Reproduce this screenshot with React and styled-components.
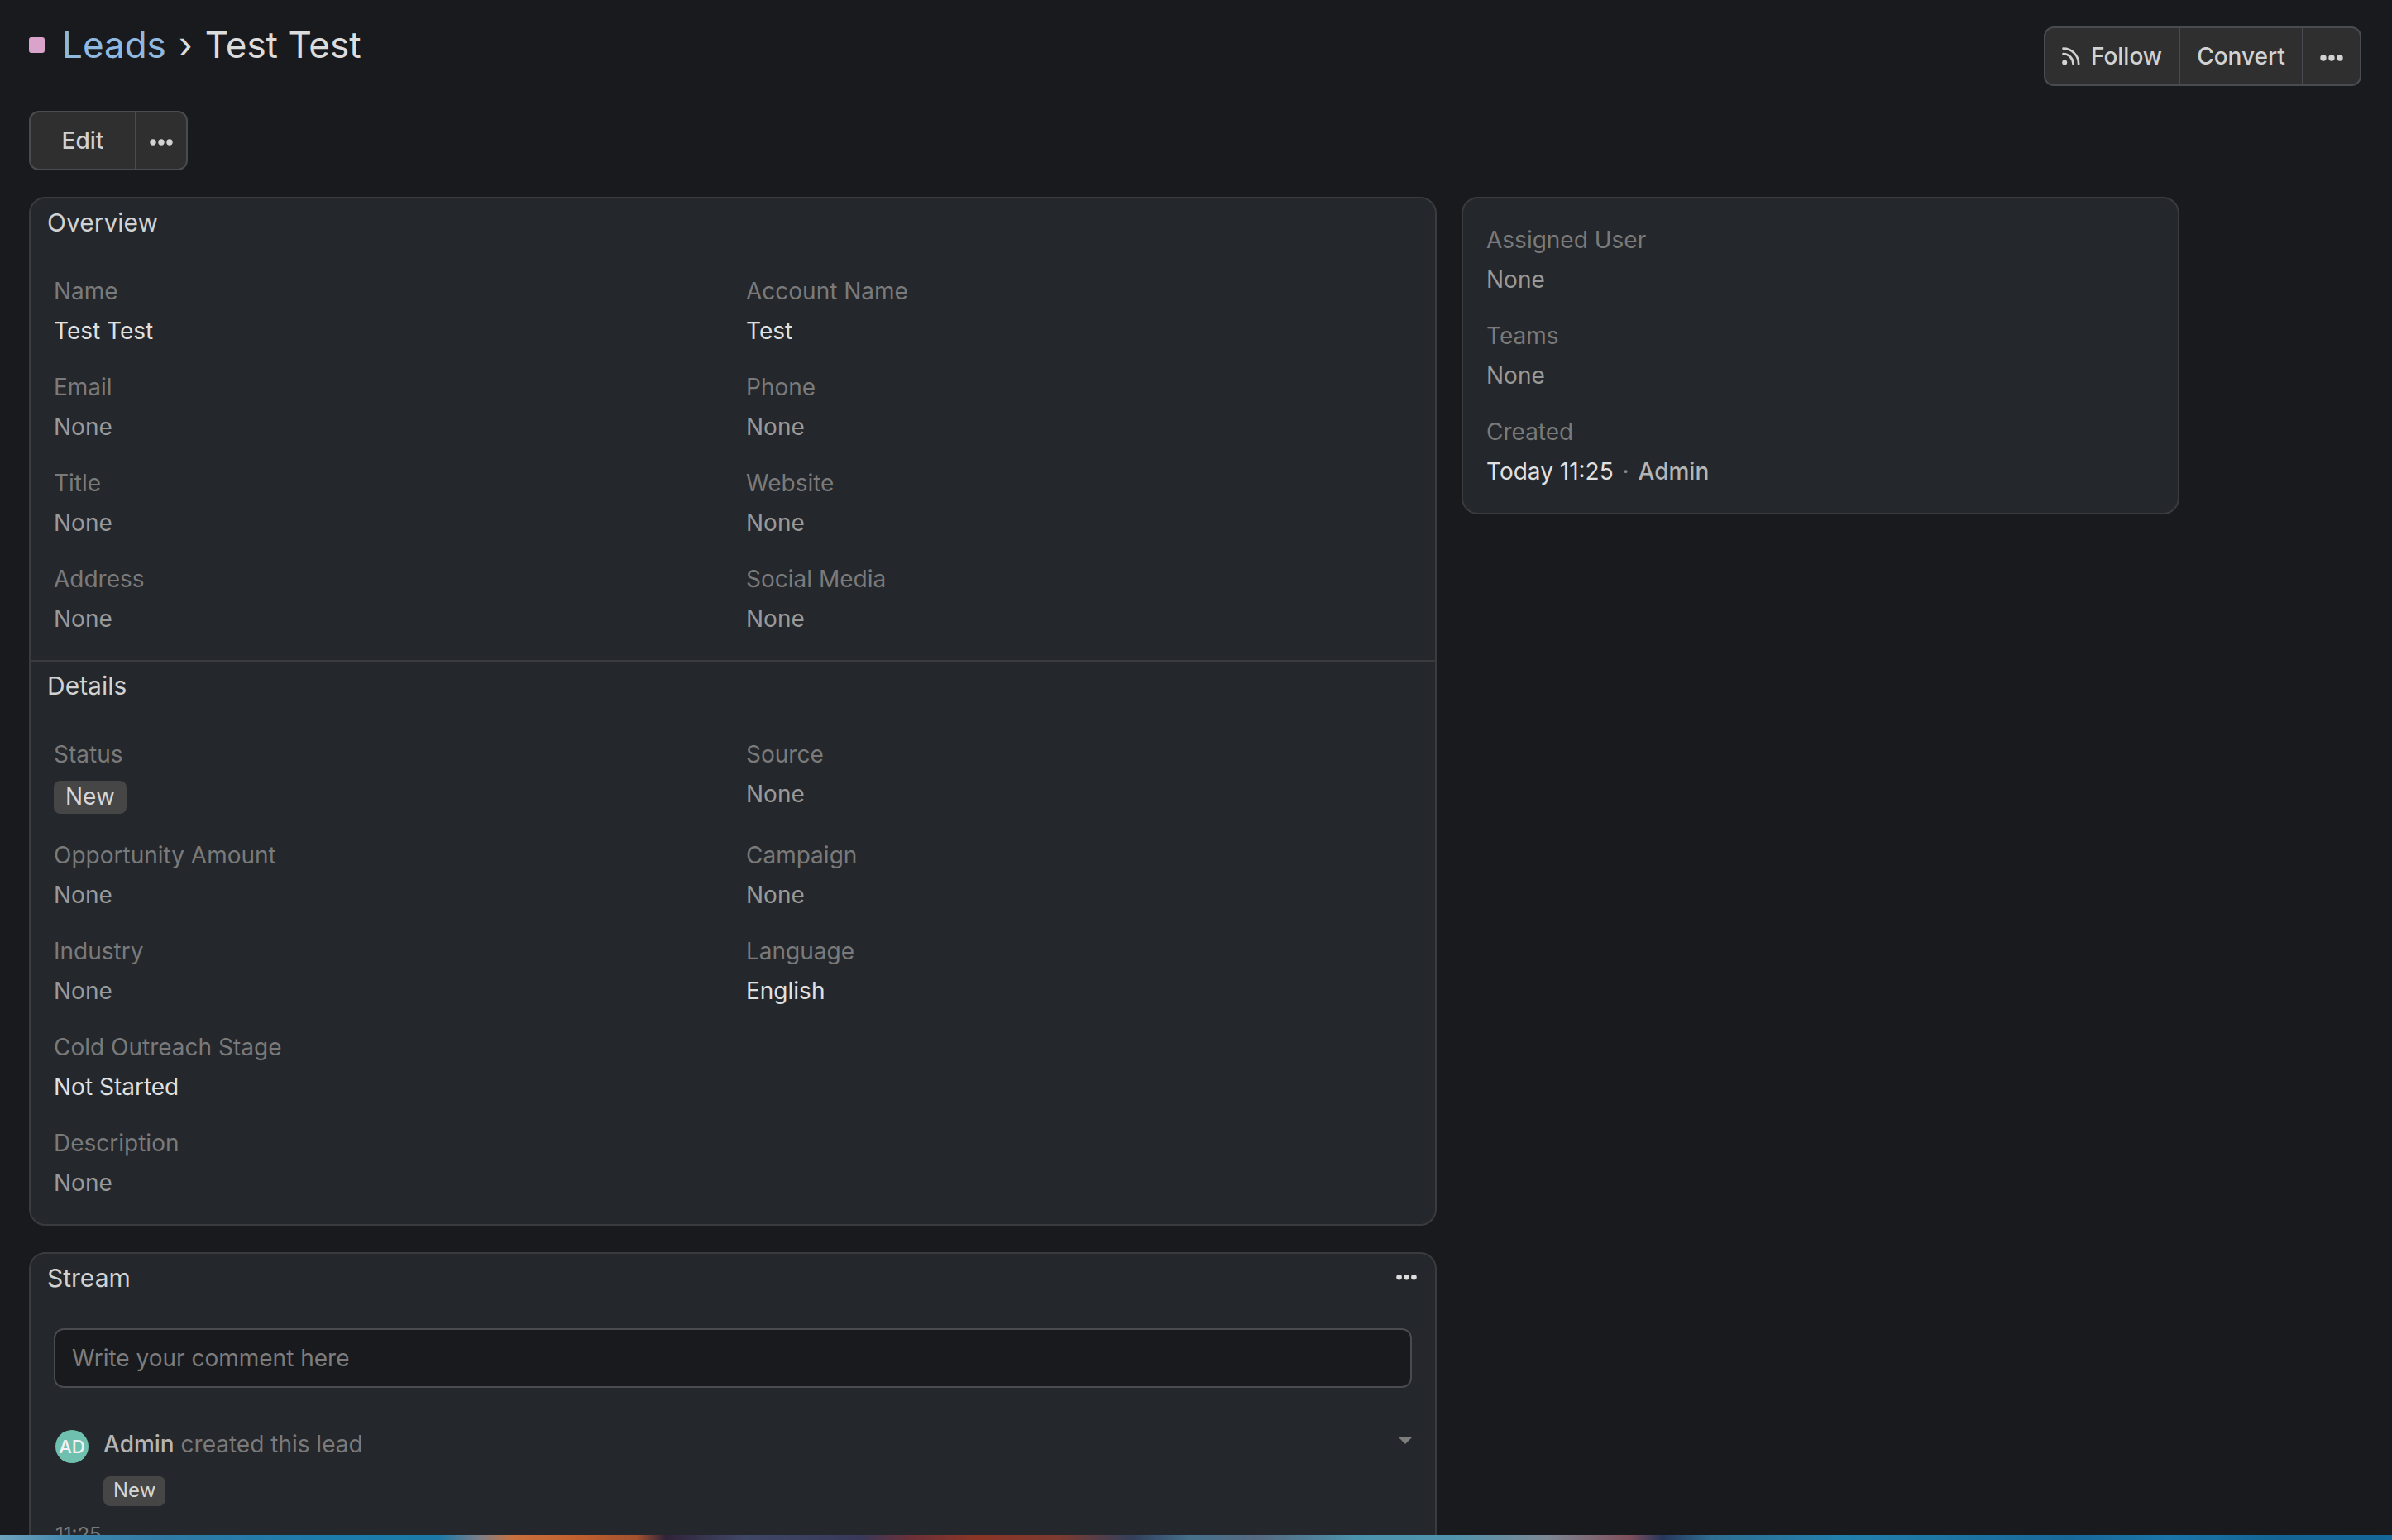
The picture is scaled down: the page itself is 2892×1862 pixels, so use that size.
import styled, { createGlobalStyle } from "styled-components";

const GlobalStyle = createGlobalStyle`
  * {
    box-sizing: border-box;
  }
  body {
    margin: 0;
    background-color: #191a1d;
    color: #dcdcdc;
    font-family: Inter, "Liberation Sans", sans-serif;
    font-size: 28px;
    line-height: 40px;
  }
`;

const Screen = styled.div`
  height: 1862px;
  display: flex;
  flex-direction: column;
  overflow: hidden;
`;

const Page = styled.main`
  flex: 1;
  min-height: 0;
  overflow: hidden;
  padding: 0 37px 0 35px;
`;

const Wallpaper = styled.div`
  height: 6px;
  flex-shrink: 0;
  background: linear-gradient(
    90deg,
    #6fa3bd 0,
    #3f86ad 90px,
    #2f7ba6 200px,
    #1c7cab 400px,
    #1b7aa8 530px,
    #7d7f88 580px,
    #c9723f 620px,
    #c4622f 690px,
    #a5512f 770px,
    #30233a 805px,
    #3f4766 900px,
    #38395a 1040px,
    #6b3038 1100px,
    #8b3526 1180px,
    #7d3a30 1280px,
    #33405c 1370px,
    #45718c 1440px,
    #566a80 1520px,
    #4b93ac 1640px,
    #5193ad 1760px,
    #7d8894 1870px,
    #80505c 1970px,
    #27375c 2010px,
    #2e6f92 2070px,
    #2280ad 2230px,
    #17699a 2500px,
    #1b75a8 2620px,
    #126595 2760px,
    #14689a 2892px
  );
`;

const TitleBar = styled.header`
  display: flex;
  justify-content: space-between;
  align-items: flex-start;
  height: 134px;
`;

const Breadcrumb = styled.h1`
  display: flex;
  align-items: center;
  margin: 24px 0 0;
  font-size: 44px;
  line-height: 60px;
  font-weight: 400;
`;

const Swatch = styled.span`
  width: 19px;
  height: 19px;
  margin-right: 21px;
  border-radius: 3px;
  background-color: #d9a3cb;
`;

const EntityLink = styled.a`
  color: #8fb9e0;
`;

const Separator = styled.span`
  margin: 0 15px;
`;

const ButtonGroup = styled.div`
  display: flex;
  width: max-content;
  margin-top: ${({ $top }) => $top || 0}px;
  border: 2px solid #4a4b50;
  border-radius: 12px;
  background-color: #2f2f2f;
  overflow: hidden;
`;

const Button = styled.button`
  display: flex;
  align-items: center;
  justify-content: center;
  gap: 13px;
  width: ${({ $width }) => $width}px;
  height: 68px;
  padding: 0;
  border: none;
  background: none;
  color: #d2d2d2;
  font: 500 28px/40px Inter, "Liberation Sans", sans-serif;

  & + & {
    border-left: 2px solid #4a4b50;
  }
`;

const Columns = styled.div`
  display: flex;
  align-items: flex-start;
  gap: 30px;
  margin-top: 32px;
`;

const MainColumn = styled.div`
  display: flex;
  flex-direction: column;
  gap: 32px;
  width: 1702px;
`;

const Panel = styled.section`
  width: ${({ $width }) => ($width ? `${$width}px` : "100%")};
  border: 2px solid #3a3b3e;
  border-radius: 20px;
  background-color: #24272b;
`;

const Section = styled.div`
  & + & {
    border-top: 2px solid #3a3b3e;
  }
`;

const SectionHeader = styled.div`
  display: flex;
  justify-content: space-between;
  padding: 9px 22px 0 20px;
  height: 58px;

  svg {
    margin-top: 5px;
  }
`;

const SectionTitle = styled.h4`
  margin: 0;
  font-size: 30px;
  font-weight: 400;
  color: #d2d2d2;
`;

const FieldGrid = styled.div`
  display: grid;
  grid-template-columns: repeat(${({ $columns }) => $columns}, 1fr);
  gap: 28px 32px;
  padding: ${({ $top }) => $top}px 28px 30px;
`;

const Cell = styled.div`
  display: flex;
  flex-direction: column;
  gap: 8px;
`;

const Label = styled.label`
  color: #7a7a7a;
`;

const Value = styled.div`
  color: ${({ $none }) => ($none ? "#999999" : "#e0e0e0")};
`;

const Muted = styled.span`
  margin: 0 3px;
  color: #8a8a8a;
`;

const UserLink = styled.a`
  color: #b5b5b5;
  font-weight: 500;
`;

const Badge = styled.span`
  display: block;
  width: max-content;
  margin: ${({ $small }) => ($small ? "19px 0 0" : "4px 0 2px")};
  padding: 0 ${({ $small }) => ($small ? 12 : 14)}px;
  border-radius: 8px;
  background-color: #464646;
  color: #d6d6d6;
  font-size: ${({ $small }) => ($small ? 24 : 28)}px;
  line-height: ${({ $small }) => ($small ? "33px" : "38px")};
  height: ${({ $small }) => ($small ? 36 : 40)}px;
`;

const StreamBody = styled.div`
  padding: 32px 28px 0;
`;

const CommentInput = styled.input`
  display: block;
  width: 100%;
  height: 72px;
  padding: 0 20px;
  border: 2px solid #4a4b50;
  border-radius: 12px;
  background-color: #191a1d;
  font: 400 28px/40px Inter, "Liberation Sans", sans-serif;

  &::placeholder {
    color: #7d7d7d;
    opacity: 1;
  }
`;

const Note = styled.div`
  display: flex;
  align-items: flex-start;
  padding: 48px 0 0 2px;
`;

const Avatar = styled.div`
  width: 40px;
  height: 40px;
  margin: 3px 18px 0 0;
  border-radius: 50%;
  background-color: #70c0b0;
  color: #f2f2f2;
  font-size: 22px;
  font-weight: 500;
  text-align: center;
`;

const NoteText = styled.div`
  flex: 1;
`;

const Caret = styled.span`
  margin-top: 12px;
  border: 8px solid transparent;
  border-top-color: #7d7d7d;
  border-bottom: 0;
`;

const Time = styled.div`
  padding: 15px 0 0 2px;
  color: #7a7a7a;
  font-size: 24px;
`;

const Dots = ({ size = 28 }) => (
  <svg width={size} height={size} viewBox="0 0 28 28" fill="currentColor">
    <circle cx="4" cy="16" r="3.7" />
    <circle cx="14" cy="16" r="3.7" />
    <circle cx="24" cy="16" r="3.7" />
  </svg>
);

const RssIcon = () => (
  <svg width="22" height="22" viewBox="0 0 22 22" fill="none">
    <circle cx="3.2" cy="18.6" r="3" fill="currentColor" />
    <path
      d="M1.6 8.2a12 12 0 0 1 12 12M1.6 1.7a18.5 18.5 0 0 1 18.5 18.5"
      stroke="currentColor"
      strokeWidth="2.8"
      strokeLinecap="round"
    />
  </svg>
);

const overview = [
  ["Name", "Test Test"],
  ["Account Name", "Test"],
  ["Email"],
  ["Phone"],
  ["Title"],
  ["Website"],
  ["Address"],
  ["Social Media"],
];

const details = [
  ["Status", <Badge key="status">New</Badge>],
  ["Source"],
  ["Opportunity Amount"],
  ["Campaign"],
  ["Industry"],
  ["Language", "English"],
  ["Cold Outreach Stage", "Not Started"],
  null,
  ["Description"],
];

const side = [
  ["Assigned User"],
  ["Teams"],
  [
    "Created",
    <>
      Today 11:25 <Muted>·</Muted> <UserLink>Admin</UserLink>
    </>,
  ],
];

const Fields = ({ items, columns = 2, top = 34 }) => (
  <FieldGrid $columns={columns} $top={top}>
    {items.map((item, i) =>
      item ? (
        <Cell key={item[0]}>
          <Label>{item[0]}</Label>
          <Value $none={!item[1]}>{item[1] || "None"}</Value>
        </Cell>
      ) : (
        <Cell key={i} />
      )
    )}
  </FieldGrid>
);

const App = () => {
  return (
    <Screen>
      <GlobalStyle />
      <Page>
        <TitleBar>
          <Breadcrumb>
            <Swatch />
            <EntityLink>Leads</EntityLink>
            <Separator>›</Separator>
            Test Test
          </Breadcrumb>
          <ButtonGroup $top={32}>
            <Button $width={161}>
              <RssIcon />
              Follow
            </Button>
            <Button $width={149}>Convert</Button>
            <Button $width={70}>
              <Dots />
            </Button>
          </ButtonGroup>
        </TitleBar>

        <ButtonGroup>
          <Button $width={126}>Edit</Button>
          <Button $width={62}>
            <Dots />
          </Button>
        </ButtonGroup>

        <Columns>
          <MainColumn>
            <Panel>
              <Section>
                <SectionHeader>
                  <SectionTitle>Overview</SectionTitle>
                </SectionHeader>
                <Fields items={overview} />
              </Section>
              <Section>
                <SectionHeader>
                  <SectionTitle>Details</SectionTitle>
                </SectionHeader>
                <Fields items={details} />
              </Section>
            </Panel>

            <Panel>
              <SectionHeader>
                <SectionTitle>Stream</SectionTitle>
                <Dots size={25} />
              </SectionHeader>
              <StreamBody>
                <CommentInput placeholder="Write your comment here" />
                <Note>
                  <Avatar>AD</Avatar>
                  <NoteText>
                    <UserLink>Admin</UserLink> <Label>created this lead</Label>
                    <Badge $small>New</Badge>
                  </NoteText>
                  <Caret />
                </Note>
                <Time>11:25</Time>
              </StreamBody>
            </Panel>
          </MainColumn>

          <Panel $width={868}>
            <Fields items={side} columns={1} top={30} />
          </Panel>
        </Columns>
      </Page>
      <Wallpaper />
    </Screen>
  );
};

export default App;
